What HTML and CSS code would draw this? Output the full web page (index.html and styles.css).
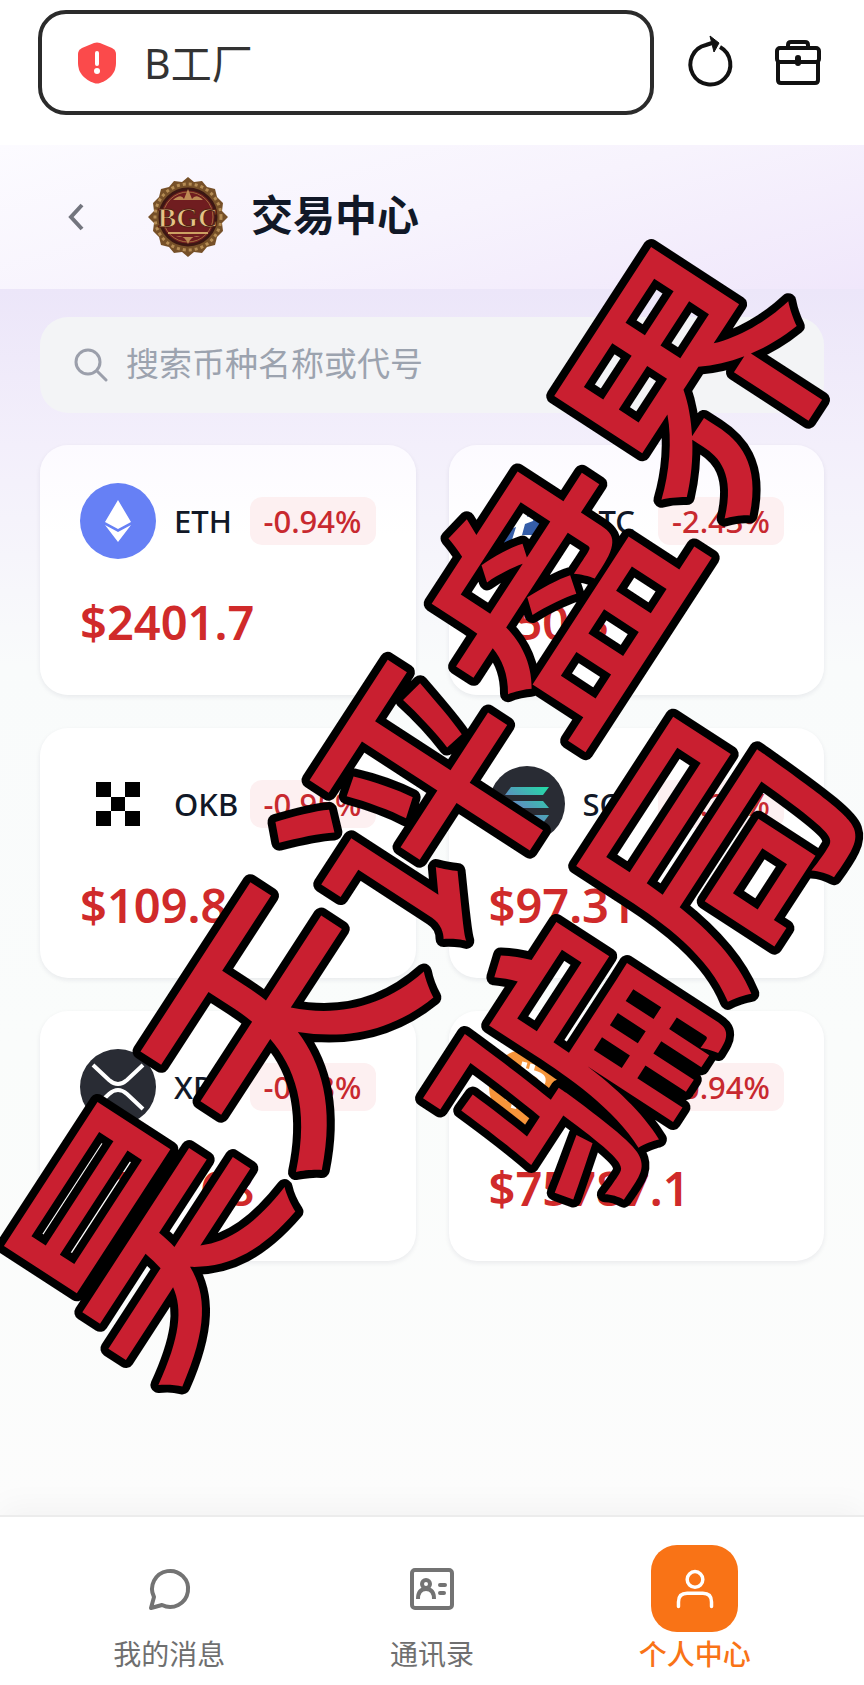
FILE: index.html
```html
<!DOCTYPE html>
<html lang="zh-CN">

<head>
    <meta charset="utf-8">
    <meta name="viewport" content="width=device-width,initial-scale=1.0">
    <title>交易中心</title>
    <link rel="stylesheet" href="styles.css">
</head>

<body>
    <div class="wrap">
        <div class="browser">
            <div class="address">
                <svg class="shield" viewBox="0 0 38 42">
                    <path d="M16 1 Q19 0 22 1 L34 6 Q38 8 38 12 V21 Q38 35 22 41 Q19 42 16 41 Q0 35 0 21 V12 Q0 8 4 6 Z" fill="#fb4a4b" />
                    <path d="M19 11 V22" stroke="#fff" stroke-width="4" stroke-linecap="round" />
                    <circle cx="19" cy="29" r="3" fill="#fff" />
                </svg>
                <span>B工厂</span>
            </div>
            <button class="tool" aria-label="刷新">
                <svg viewBox="0 0 48 52">
                    <path d="M33 10 A20 20 0 1 1 19 8 L25 6" transform="translate(-3 0)" fill="none" stroke="#111" stroke-width="4" />
                    <path d="M20 -1 L29 6 L24 15 Z" fill="#111" stroke="#111" stroke-linejoin="round" />
                </svg>
            </button>
            <button class="tool" aria-label="工具箱">
                <svg viewBox="0 0 48 52" fill="none" stroke="#111" stroke-width="4" stroke-linejoin="round">
                    <path d="M14 11 V8 Q14 5 17 5 H31 Q34 5 34 8 V11" />
                    <rect x="3" y="11" width="42" height="14" rx="3" />
                    <path d="M4 25 V43 Q4 46 7 46 H41 Q44 46 44 43 V25" />
                    <path d="M24 21 V26" stroke-width="6" stroke-linecap="round" />
                </svg>
            </button>
        </div>

        <div class="page">
            <div class="header">
                <a class="back" href="#" aria-label="返回">
                    <svg viewBox="0 0 16 28"><path d="M14 2 L3 14 L14 26" fill="none" stroke="#73757e" stroke-width="4" /></svg>
                </a>
                <svg class="logo" viewBox="0 0 80 80">
                    <path d="M40 0 L46 5 L54 4 L59 10 L67 12 L69 20 L75 26 L74 34 L80 40 L74 46 L75 54 L69 60 L67 68 L59 70 L54 76 L46 75 L40 80 L34 75 L26 76 L21 70 L13 68 L11 60 L5 54 L6 46 L0 40 L6 34 L5 26 L11 20 L13 12 L21 10 L26 4 L34 5 Z" fill="#765028" />
                    <circle cx="40" cy="40" r="33" fill="none" stroke="#b58c54" stroke-width="3" stroke-dasharray="3 3" />
                    <circle cx="40" cy="40" r="28" fill="#701d20" stroke="#3c1713" stroke-width="3" />
                    <circle cx="40" cy="40" r="25" fill="none" stroke="#a06c3c" />
                    <path d="M25 23 Q33 16 36 22 L40 12 L44 22 Q48 16 55 23 Z M28 60 Q36 57 40 67 Q44 57 52 60 Z" fill="#bd8b54" />
                    <path d="M20 56 H60" stroke="#cda163" stroke-width="2" />
                    <text x="40" y="50" text-anchor="middle" class="logo-text">BGC</text>
                </svg>
                <h1>交易中心</h1>
            </div>

            <div class="content">
                <label class="search">
                    <svg viewBox="0 0 34 34" fill="none" stroke="#9b9fab" stroke-width="3">
                        <circle cx="14" cy="14" r="12" />
                        <path d="M23 23 L32 32" stroke-linecap="round" />
                    </svg>
                    <input type="text" placeholder="搜索币种名称或代号" aria-label="搜索币种">
                </label>

                <div class="list">
                    <div class="card">
                        <div class="line">
                            <svg class="coin" viewBox="0 0 76 76">
                                <circle cx="38" cy="38" r="38" fill="#6680f5" />
                                <path d="M38 17 L51 39 L38 46 L25 39 Z M25 42 L38 49 L51 42 L38 59 Z" fill="#fff" />
                            </svg>
                            <span class="name">ETH</span>
                            <span class="rate">-0.94%</span>
                        </div>
                        <div class="price">$2401.7</div>
                    </div>
                    <div class="card">
                        <div class="line">
                            <svg class="coin" viewBox="0 0 76 76">
                                <circle cx="38" cy="38" r="38" fill="#345da8" />
                                <path d="M33 16 H43 L38 34 L46 31 L44 38 L36 41 L33 52 H53 L51 60 H22 L27 44 L22 46 L24 39 L29 37 Z" fill="#fff" />
                            </svg>
                            <span class="name">LTC</span>
                            <span class="rate">-2.43%</span>
                        </div>
                        <div class="price">$50.3</div>
                    </div>
                    <div class="card">
                        <div class="line">
                            <svg class="coin" viewBox="0 0 76 76">
                                <path d="M16 16 H31 V31 H16 Z M45 16 H60 V31 H45 Z M31 31 H45 V45 H31 Z M16 45 H31 V60 H16 Z M45 45 H60 V60 H45 Z" fill="#000" />
                            </svg>
                            <span class="name">OKB</span>
                            <span class="rate">-0.95%</span>
                        </div>
                        <div class="price">$109.8</div>
                    </div>
                    <div class="card">
                        <div class="line">
                            <svg class="coin" viewBox="0 0 76 76">
                                <defs>
                                    <linearGradient id="sol" x1="0" y1="1" x2="1" y2="0">
                                        <stop offset="0" stop-color="#855bd0" />
                                        <stop offset="1" stop-color="#20dfa5" />
                                    </linearGradient>
                                </defs>
                                <circle cx="38" cy="38" r="38" fill="#292c34" />
                                <path d="M22 21 H60 L54 29 H16 Z M16 35 H54 L60 42 H22 Z M22 49 H60 L54 57 H16 Z" fill="url(#sol)" />
                            </svg>
                            <span class="name">SOL</span>
                            <span class="rate">-2.20%</span>
                        </div>
                        <div class="price">$97.31</div>
                    </div>
                    <div class="card">
                        <div class="line">
                            <svg class="coin" viewBox="0 0 76 76">
                                <circle cx="38" cy="38" r="38" fill="#292c34" />
                                <path d="M13 16 L29 31 Q38 39 47 31 L63 16 M13 60 L29 45 Q38 37 47 45 L63 60" fill="none" stroke="#fff" stroke-width="4" />
                            </svg>
                            <span class="name">XRP</span>
                            <span class="rate">-0.13%</span>
                        </div>
                        <div class="price">$1.3768</div>
                    </div>
                    <div class="card">
                        <div class="line">
                            <svg class="coin" viewBox="0 0 76 76">
                                <circle cx="38" cy="38" r="38" fill="#f6953a" />
                                <text x="38" y="56" text-anchor="middle" transform="rotate(14 38 38)" class="btc-text">₿</text>
                            </svg>
                            <span class="name">BTC</span>
                            <span class="rate">-0.94%</span>
                        </div>
                        <div class="price">$75787.1</div>
                    </div>
                </div>
            </div>
        </div>

        <div class="nav">
            <a href="#">
                <span class="icon">
                    <svg viewBox="0 0 46 46" fill="none" stroke="#737373" stroke-width="4" stroke-linejoin="round">
                        <path d="M5 42 L8 31 A18 18 0 1 1 16 39 Z" />
                    </svg>
                </span>
                我的消息
            </a>
            <a href="#">
                <span class="icon">
                    <svg viewBox="0 0 46 46" fill="none" stroke="#737373" stroke-width="4">
                        <rect x="3" y="4" width="40" height="38" rx="3" />
                        <circle cx="17" cy="18" r="4" />
                        <path d="M9 33 Q9 23 17 23 Q25 23 25 33" />
                        <path d="M31 19 H36 M31 27 H35" stroke-linecap="round" />
                    </svg>
                </span>
                通讯录
            </a>
            <a href="#" class="active">
                <span class="icon">
                    <svg viewBox="0 0 46 46" fill="none" stroke="#fff" stroke-width="4" stroke-linecap="round">
                        <circle cx="23" cy="12" r="9" />
                        <path d="M4 43 V38 Q4 28 14 28 H32 Q42 28 42 38 V43" />
                    </svg>
                </span>
                个人中心
            </a>
        </div>

        <svg class="mark" viewBox="-432 -842 864 1685">
            <g transform="translate(100 40) rotate(-57)" text-anchor="middle">
                <text y="-40">昊天评盘界</text>
                <text y="230">骗局</text>
            </g>
        </svg>
    </div>
</body>

</html>
```
FILE: styles.css
```css
* {
    box-sizing: border-box;
}

body,
h1 {
    margin: 0;
}

body {
    background: #fff;
    font-family: "Noto Sans", "Noto Sans CJK SC", sans-serif;
}

a {
    color: inherit;
    text-decoration: none;
}

svg {
    display: block;
    flex-shrink: 0;
}

.wrap {
    position: relative;
    display: flex;
    flex-direction: column;
    min-height: 100vh;
    overflow: hidden;
}

.browser {
    display: flex;
    align-items: center;
    gap: 36px;
    padding: 10px 42px 30px 38px;
}

.address {
    flex: 1;
    display: flex;
    align-items: center;
    gap: 28px;
    height: 105px;
    padding: 0 36px;
    border: 4px solid #2b2b2b;
    border-radius: 28px;
    color: #333;
    font-size: 41px;
    line-height: 56px;
}

.shield {
    width: 38px;
    height: 42px;
}

.tool {
    padding: 0;
    border: none;
    background: none;
}

.tool svg {
    width: 48px;
    height: 52px;
    overflow: visible;
}

.page {
    flex: 1;
    background: linear-gradient(#ece6f9, #ece6f9 144px, #f3effb 300px, #f9fbfb 520px, #fafcfb 900px, #fcfcfc);
}

.header {
    display: flex;
    align-items: center;
    height: 144px;
    padding: 0 68px;
    background: linear-gradient(165deg, #fcfbff, #f7f3fd 50%, #f0e7fb);
}

.back svg {
    width: 16px;
    height: 28px;
}

.logo {
    width: 80px;
    height: 80px;
    margin: 0 23px 0 64px;
}

.logo-text {
    fill: #e5c286;
    stroke: #51200f;
    stroke-width: 1px;
    font: bold 28px "Liberation Serif", serif;
}

.header h1 {
    padding-bottom: 4px;
    color: #111827;
    font-size: 42px;
    font-weight: 700;
    line-height: 56px;
}

.content {
    padding: 28px 40px;
}

.search {
    display: flex;
    align-items: center;
    gap: 18px;
    height: 96px;
    margin-bottom: 32px;
    padding: 0 34px;
    border-radius: 28px;
    background: #f3f4f6;
}

.search svg {
    width: 34px;
    height: 34px;
}

.search input {
    flex: 1;
    min-width: 0;
    padding: 0 0 4px;
    border: none;
    outline: none;
    background: none;
    color: #333;
    font: inherit;
    font-size: 33px;
}

.search input::placeholder {
    color: #9ca3af;
}

.list {
    display: grid;
    grid-template-columns: 1fr 1fr;
    gap: 33px;
}

.card {
    height: 250px;
    padding: 38px 40px;
    border-radius: 28px;
    background: linear-gradient(#fcfaff, #fff 90px);
    box-shadow: 0 2px 5px rgba(30, 30, 60, .08);
}

.card:nth-child(n+3) {
    background: #fff;
}

.line {
    display: flex;
    align-items: center;
}

.coin {
    width: 76px;
    height: 76px;
}

.name {
    margin-left: 18px;
    color: #111827;
    font-size: 31px;
    font-weight: 500;
    line-height: 48px;
}

.rate {
    margin-left: auto;
    padding: 0 14px;
    border-radius: 12px;
    background: #fdf0f1;
    color: #c8292f;
    font-size: 31px;
    font-weight: 500;
    line-height: 48px;
}

.price {
    margin-top: 32px;
    color: #d02a2a;
    font-size: 47px;
    font-weight: 600;
    line-height: 62px;
}

.btc-text {
    fill: #fff;
    font: bold 52px "DejaVu Sans", sans-serif;
}

.nav {
    display: flex;
    height: 170px;
    padding: 28px 38px 0;
    border-top: 2px solid #ececec;
    background: #fff;
    box-shadow: 0 -8px 30px rgba(0, 0, 0, .04);
}

.nav a {
    flex: 1;
    display: flex;
    flex-direction: column;
    align-items: center;
    color: #6f6f6f;
    font-size: 28px;
    line-height: 44px;
}

.icon {
    display: flex;
    align-items: center;
    justify-content: center;
    width: 87px;
    height: 87px;
    border-radius: 26px;
}

.icon svg {
    width: 46px;
    height: 46px;
}

.nav .active {
    color: #f97316;
    font-weight: 500;
}

.active .icon {
    background: #f97316;
}

.active .icon svg {
    width: 40px;
    height: 40px;
}

.mark {
    position: absolute;
    left: 0;
    top: 0;
    width: 100%;
    height: 100%;
    pointer-events: none;
}

.mark text {
    fill: #c91f30;
    stroke: #000;
    stroke-width: 16px;
    stroke-linejoin: round;
    paint-order: stroke;
    font-family: "Noto Sans CJK SC", sans-serif;
    font-size: 254px;
    font-weight: 500;
}
```
